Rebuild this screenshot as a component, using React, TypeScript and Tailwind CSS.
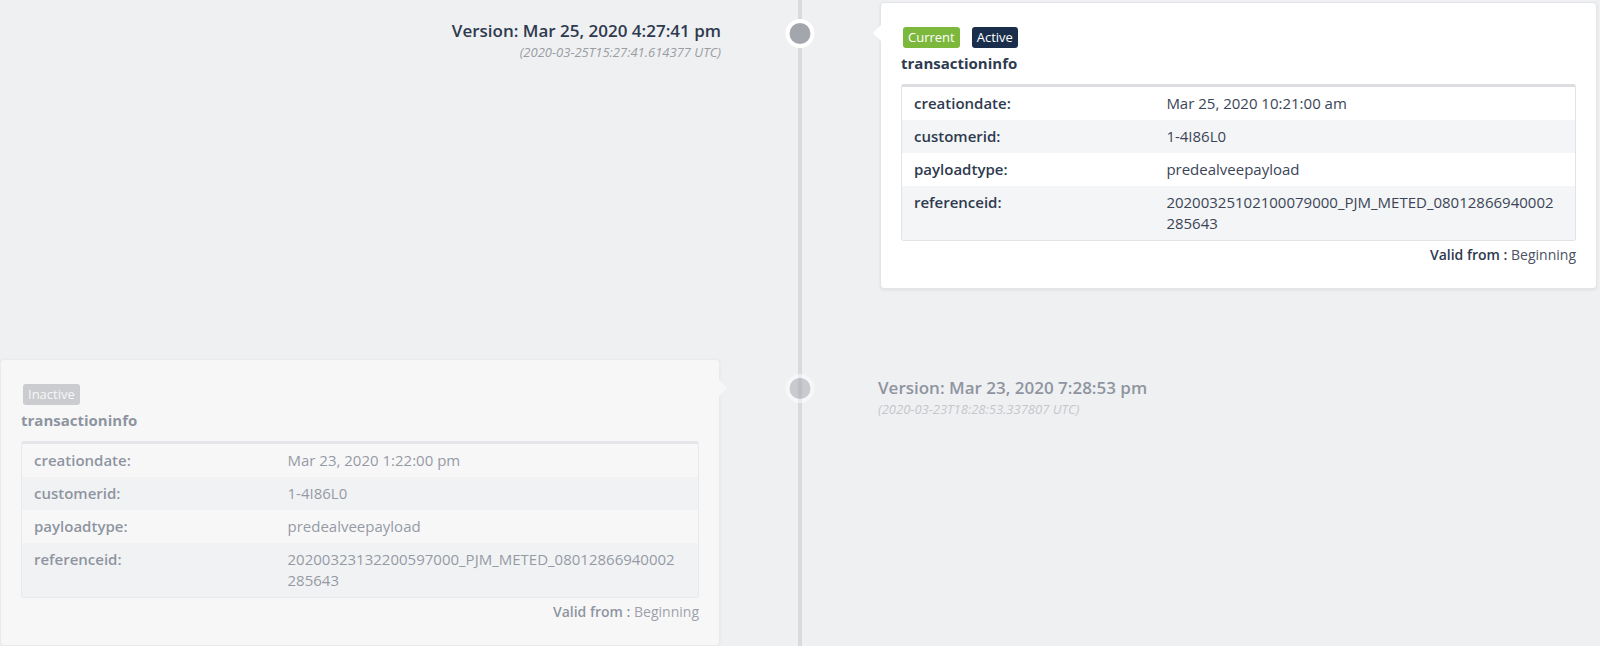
import React from "react";

type Field = { label: string; value: string };

interface VersionEntry {
  title: string;
  utc: string;
  badges: { text: string; className: string }[];
  fields: Field[];
  active: boolean;
}

const versions: VersionEntry[] = [
  {
    title: "Version: Mar 25, 2020 4:27:41 pm",
    utc: "(2020-03-25T15:27:41.614377 UTC)",
    badges: [
      { text: "Current", className: "bg-[#7cb83b] text-white" },
      { text: "Active", className: "bg-[#1a2e4c] text-white" },
    ],
    fields: [
      { label: "creationdate:", value: "Mar 25, 2020 10:21:00 am" },
      { label: "customerid:", value: "1-4I86L0" },
      { label: "payloadtype:", value: "predealveepayload" },
      { label: "referenceid:", value: "20200325102100079000_PJM_METED_08012866940002285643" },
    ],
    active: true,
  },
  {
    title: "Version: Mar 23, 2020 7:28:53 pm",
    utc: "(2020-03-23T18:28:53.337807 UTC)",
    badges: [{ text: "Inactive", className: "bg-[#a7a9ae] text-white" }],
    fields: [
      { label: "creationdate:", value: "Mar 23, 2020 1:22:00 pm" },
      { label: "customerid:", value: "1-4I86L0" },
      { label: "payloadtype:", value: "predealveepayload" },
      { label: "referenceid:", value: "20200323132200597000_PJM_METED_08012866940002285643" },
    ],
    active: false,
  },
];

const VersionLabel = ({ entry, align }: { entry: VersionEntry; align: "left" | "right" }) => (
  <div className={`pt-[17px] ${align === "right" ? "text-right pr-[79px]" : "text-left pl-[78px]"}`}>
    <div className="text-[17px] leading-[24px] font-semibold text-[#2e3a4f]">{entry.title}</div>
    <div className="text-[13px] leading-[18px] italic text-[#9a9da3]">{entry.utc}</div>
  </div>
);

const VersionCard = ({ entry, side }: { entry: VersionEntry; side: "left" | "right" }) => (
  <div className="relative bg-white rounded-[4px] border border-[#e4e5e8] shadow-[0_1px_3px_rgba(0,0,0,0.08)] px-[20px] pt-[24px] pb-[24px]">
    {/* little pointer towards the timeline */}
    {side === "right" ? (
      <div className="absolute left-[-8px] top-[22px] w-0 h-0 border-y-[8px] border-y-transparent border-r-[8px] border-r-white" />
    ) : (
      <div className="absolute right-[-8px] top-[20px] w-0 h-0 border-y-[8px] border-y-transparent border-l-[8px] border-l-white" />
    )}
    <div className="flex gap-[12px] ml-[2px]">
      {entry.badges.map((b) => (
        <span key={b.text} className={`px-[5px] rounded-[3px] text-[13px] leading-[21px] ${b.className}`}>
          {b.text}
        </span>
      ))}
    </div>
    <div className="mt-[5px] text-[15px] leading-[21px] font-bold text-[#2e3a4f]">transactioninfo</div>
    <div className="mt-[10px] rounded-[3px] border border-[#e2e3e6] border-t-[3px] border-t-[#dcdde1] overflow-hidden">
      <table className="w-full table-fixed border-collapse text-[15px] leading-[21px]">
        <tbody>
          {entry.fields.map((f, i) => (
            <tr key={f.label} className={i % 2 === 1 ? "bg-[#f4f5f6]" : "bg-white"}>
              <td className="w-[37.5%] px-[12px] py-[6px] align-top font-semibold text-[#2e3a4f]">{f.label}</td>
              <td className="pl-[12px] pr-[18px] py-[6px] align-top text-[#3b4557] break-all">{f.value}</td>
            </tr>
          ))}
        </tbody>
      </table>
    </div>
    <div className="mt-[5px] text-right text-[14px] leading-[18px] text-[#4b5261]">
      <span className="font-semibold text-[#2e3a4f]">Valid from :</span> Beginning
    </div>
  </div>
);

const Dot = ({ top }: { top: string }) => (
  <div
    className={`absolute left-1/2 -translate-x-1/2 ${top} w-[29px] h-[29px] rounded-full bg-[#a4a6ae] border-[4px] border-white`}
  />
);

export default function App() {
  return (
    <div
      className="w-full h-[646px] overflow-hidden bg-[#eff0f2]"
      style={{ fontFamily: '"Open Sans", "Noto Sans", sans-serif' }}
    >
      <div className="relative pt-[2px]">
        <div className="absolute left-1/2 -translate-x-1/2 top-0 bottom-[-20px] w-[4px] bg-[#d9dade]" />

        {/* current version: label left, card right */}
        <div className="relative grid grid-cols-2">
          <VersionLabel entry={versions[0]} align="right" />
          <div className="pl-[80px] pr-[3px]">
            <VersionCard entry={versions[0]} side="right" />
          </div>
          <Dot top="top-[17px]" />
        </div>

        {/* older version: card left, label right */}
        <div className="relative grid grid-cols-2 mt-[70px] opacity-50">
          <div className="pr-[80px]">
            <VersionCard entry={versions[1]} side="left" />
          </div>
          <VersionLabel entry={versions[1]} align="left" />
          <Dot top="top-[15px]" />
        </div>
      </div>
    </div>
  );
}
